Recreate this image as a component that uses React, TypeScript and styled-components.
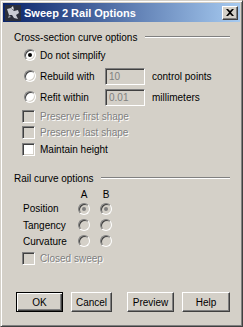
import React from 'react';
import styled, { createGlobalStyle } from 'styled-components';

const Global = createGlobalStyle`
  html, body { margin: 0; padding: 0; background: #d4d0c8; }
  body { font-family: "Liberation Sans", Arial, sans-serif; font-size: 10px; color: #000; }
  * { box-sizing: border-box; }
`;

const Window = styled.div`
  width: 243px;
  height: 327px;
  background: #d4d0c8;
  border-style: solid;
  border-width: 1px;
  border-color: #d4d0c8 #404040 #404040 #d4d0c8;
  box-shadow: inset 1px 1px #fff, inset -1px -1px #808080;
  padding: 2px;
  display: flex;
  flex-direction: column;
`;

const TitleBar = styled.div`
  height: 19px;
  display: flex;
  align-items: center;
  padding: 0 2px 0 2px;
  background: linear-gradient(to right, #0a246a, #a6caf0);
`;

const TitleText = styled.span`
  flex: 1;
  margin-left: 3px;
  color: #fff;
  font-weight: bold;
  font-size: 11px;
`;

const CloseBtn = styled.div`
  width: 16px;
  height: 14px;
  background: #d4d0c8;
  border-style: solid;
  border-width: 1px;
  border-color: #fff #404040 #404040 #fff;
  box-shadow: inset -1px -1px #808080;
  display: flex;
  align-items: center;
  justify-content: center;
`;

const Body = styled.div`
  padding: 8px 10px 0 11px;
  display: flex;
  flex-direction: column;
`;

const GroupHeader = styled.div<{ $mt?: number }>`
  height: 14px;
  margin-top: ${p => p.$mt ?? 0}px;
  display: flex;
  align-items: center;
  gap: 8px;
`;

const GroupLine = styled.div`
  flex: 1;
  height: 2px;
  border-top: 1px solid #808080;
  border-bottom: 1px solid #fff;
`;

const Row = styled.div<{ $h: number; $pl?: number; $mt?: number }>`
  height: ${p => p.$h}px;
  margin-top: ${p => p.$mt ?? 0}px;
  padding-left: ${p => p.$pl ?? 10}px;
  display: flex;
  align-items: center;
`;

const Radio = styled.span<{ $checked?: boolean; $disabled?: boolean }>`
  position: relative;
  flex: none;
  width: 12px;
  height: 12px;
  border-radius: 50%;
  border: 1px solid;
  border-color: #808080 #fff #fff #808080;
  box-shadow: inset 1px 1px #404040, inset -1px -1px #d4d0c8;
  background: ${p => (p.$disabled ? '#d4d0c8' : '#fff')};
  &::after {
    content: '';
    display: ${p => (p.$checked ? 'block' : 'none')};
    position: absolute;
    left: 3px;
    top: 3px;
    width: 4px;
    height: 4px;
    border-radius: 50%;
    background: ${p => (p.$disabled ? '#808080' : '#000')};
  }
`;

const Check = styled.span<{ $disabled?: boolean }>`
  flex: none;
  width: 13px;
  height: 13px;
  border: 1px solid;
  border-color: #808080 #fff #fff #808080;
  box-shadow: inset 1px 1px #404040, inset -1px -1px #d4d0c8;
  background: ${p => (p.$disabled ? '#d4d0c8' : '#fff')};
`;

const Label = styled.span<{ $disabled?: boolean; $w?: number; $ml?: number }>`
  margin-left: ${p => p.$ml ?? 4}px;
  width: ${p => (p.$w ? `${p.$w}px` : 'auto')};
  flex: none;
  white-space: nowrap;
  color: ${p => (p.$disabled ? '#808080' : '#000')};
  text-shadow: ${p => (p.$disabled ? '1px 1px #fff' : 'none')};
`;

const Input = styled.div`
  width: 40px;
  height: 17px;
  flex: none;
  border: 1px solid;
  border-color: #808080 #fff #fff #808080;
  box-shadow: inset 1px 1px #404040, inset -1px -1px #d4d0c8;
  background: #d4d0c8;
  color: #808080;
  padding: 1px 0 0 3px;
  line-height: 14px;
`;

const Unit = styled.span`
  margin-left: 7px;
  white-space: nowrap;
`;

const RailGrid = styled.div`
  margin-top: 2px;
  padding-left: 9px;
  display: grid;
  grid-template-columns: 45px 12px 12px;
  column-gap: 10px;
  grid-template-rows: 14px 15px 18px 14px;
  align-items: center;
`;

const ColHead = styled.span`
  text-align: center;
`;

const Buttons = styled.div`
  margin-top: 26px;
  padding-left: 2px;
  display: flex;
  height: 20px;
`;

const Button = styled.div<{ $w: number; $ml?: number; $default?: boolean }>`
  width: ${p => p.$w}px;
  margin-left: ${p => p.$ml ?? 0}px;
  height: 20px;
  display: flex;
  align-items: center;
  justify-content: center;
  background: #d4d0c8;
  border: 1px solid;
  border-color: ${p => (p.$default ? '#000' : '#fff #404040 #404040 #fff')};
  box-shadow: ${p =>
    p.$default
      ? 'inset 1px 1px #fff, inset -1px -1px #404040, inset -2px -2px #808080'
      : 'inset -1px -1px #808080'};
`;

const Icon = () => (
  <svg width="16" height="16" viewBox="0 0 16 16">
    <rect x="0" y="0" width="16" height="16" fill="#2b2f3a" />
    <path d="M2 4 L6 3 L9 6 L13 5 L14 8 L11 10 L13 14 L9 13 L7 10 L4 10 L3 7 Z" fill="#c8cbd2" />
    <path d="M6 3 L8 1 L9 5 Z" fill="#e8e8e8" />
    <path d="M4 10 L3 13 L6 12 Z" fill="#9a9ea8" />
  </svg>
);

const CloseX = () => (
  <svg width="8" height="7" viewBox="0 0 8 7">
    <path d="M0 0h2l2 2 2-2h2L5 3.5 8 7H6L4 5 2 7H0l3-3.5z" fill="#000" />
  </svg>
);

export default function App() {
  return (
    <>
      <Global />
      <Window>
        <TitleBar>
          <Icon />
          <TitleText>Sweep 2 Rail Options</TitleText>
          <CloseBtn>
            <CloseX />
          </CloseBtn>
        </TitleBar>
        <Body>
          <GroupHeader>
            <span>Cross-section curve options</span>
            <GroupLine />
          </GroupHeader>
          <Row $h={22}>
            <Radio $checked />
            <Label>Do not simplify</Label>
          </Row>
          <Row $h={20}>
            <Radio />
            <Label $w={65}>Rebuild with</Label>
            <Input>10</Input>
            <Unit>control points</Unit>
          </Row>
          <Row $h={22}>
            <Radio />
            <Label $w={65}>Refit within</Label>
            <Input>0.01</Input>
            <Unit>millimeters</Unit>
          </Row>
          <Row $h={16} $pl={8}>
            <Check $disabled />
            <Label $disabled $ml={5}>Preserve first shape</Label>
          </Row>
          <Row $h={17} $pl={8}>
            <Check $disabled />
            <Label $disabled $ml={5}>Preserve last shape</Label>
          </Row>
          <Row $h={16} $pl={8}>
            <Check />
            <Label $ml={5}>Maintain height</Label>
          </Row>
          <GroupHeader $mt={14}>
            <span>Rail curve options</span>
            <GroupLine />
          </GroupHeader>
          <RailGrid>
            <span />
            <ColHead>A</ColHead>
            <ColHead>B</ColHead>
            <span>Position</span>
            <Radio $checked $disabled />
            <Radio $checked $disabled />
            <span>Tangency</span>
            <Radio $disabled />
            <Radio $disabled />
            <span>Curvature</span>
            <Radio $disabled />
            <Radio $disabled />
          </RailGrid>
          <Row $h={16} $pl={8} $mt={2}>
            <Check $disabled />
            <Label $disabled $ml={5}>Closed sweep</Label>
          </Row>
          <Buttons>
            <Button $w={48} $default>OK</Button>
            <Button $w={42} $ml={8}>Cancel</Button>
            <Button $w={48} $ml={15}>Preview</Button>
            <Button $w={49} $ml={8}>Help</Button>
          </Buttons>
        </Body>
      </Window>
    </>
  );
}
